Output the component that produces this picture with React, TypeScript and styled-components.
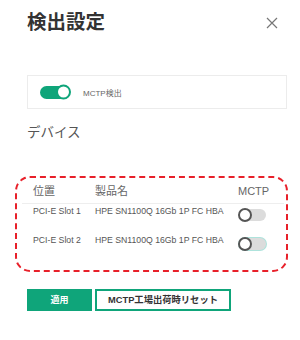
import styled, { createGlobalStyle } from "styled-components";

const GlobalStyle = createGlobalStyle`
    html, body {
        margin: 0;
        padding: 0;
        background: #fff;
    }
    body {
        font-family: "Liberation Sans", "Noto Sans CJK JP", sans-serif;
        color: #333;
    }
`;

const Panel = styled.div`
    width: 300px;
    height: 340px;
    box-sizing: border-box;
    padding: 8px 12px 0 15px;
    display: flex;
    flex-direction: column;
`;

const Header = styled.div`
    display: flex;
    justify-content: space-between;
    align-items: flex-start;
    padding: 0 10px 0 12px;
    height: 28px;
`;

const Title = styled.h1`
    margin: 0;
    font-size: 19.5px;
    line-height: 28px;
    font-weight: 700;
    color: #333;
`;

const CloseButton = styled.button`
    border: none;
    background: none;
    padding: 0;
    margin-top: 9px;
    width: 12px;
    height: 12px;
    color: #777;
    cursor: pointer;
`;

const OptionCard = styled.div`
    margin: 39px 1px 0 12px;
    height: 32px;
    flex-shrink: 0;
    border: 1px solid #ececec;
    display: flex;
    align-items: center;
    gap: 13px;
    padding-left: 12px;
`;

const OptionLabel = styled.span`
    font-size: 8px;
    color: #666;
`;

const Track = styled.span<{ $on?: boolean; $focus?: boolean }>`
    position: relative;
    display: inline-block;
    box-sizing: border-box;
    width: ${({ $on }) => ($on ? "30px" : "27px")};
    height: ${({ $on }) => ($on ? "13px" : "12px")};
    border-radius: 7px;
    background: ${({ $on }) => ($on ? "#0fa57a" : "#dcdcdc")};
    box-shadow: ${({ $focus }) => ($focus ? "0 0 0 1px #aee3dc" : "none")};
`;

const Knob = styled.span<{ $on?: boolean }>`
    position: absolute;
    top: 50%;
    transform: translateY(-50%);
    box-sizing: border-box;
    width: ${({ $on }) => ($on ? "15px" : "14px")};
    height: ${({ $on }) => ($on ? "15px" : "14px")};
    border-radius: 50%;
    background: #fff;
    border: 2px solid ${({ $on }) => ($on ? "#0fa57a" : "#555")};
    ${({ $on }) => ($on ? "right: -1px;" : "left: -1px;")}
`;

const SectionTitle = styled.h2`
    margin: 15px 0 0 12px;
    font-size: 13.5px;
    line-height: 18px;
    font-weight: 400;
    color: #555;
`;

const DeviceBox = styled.div`
    margin: 34px 0 0 0;
    height: 96px;
    flex-shrink: 0;
    box-sizing: border-box;
    border: 2px dashed #e8202a;
    border-radius: 15px;
    padding: 1px 2px 0 5px;
    overflow: hidden;
`;

const Table = styled.table`
    width: 100%;
    table-layout: fixed;
    border-collapse: collapse;
`;

const Th = styled.th<{ $first?: boolean }>`
    text-align: left;
    font-weight: 400;
    font-size: 11px;
    line-height: 14px;
    color: #666;
    height: 24px;
    padding: 0 0 0 ${({ $first }) => ($first ? "11px" : "0")};
    border-bottom: 1px solid #eee;
    white-space: nowrap;
`;

const Td = styled.td<{ $first?: boolean }>`
    font-size: 8.7px;
    line-height: 11px;
    color: #555;
    vertical-align: top;
    padding: 2px 0 0 ${({ $first }) => ($first ? "11px" : "0")};
    height: 27px;
    white-space: nowrap;
    text-align: left;
`;

const ToggleCell = styled.div`
    padding: 3px 0 0 1px;
    display: flex;
`;

const Actions = styled.div`
    display: flex;
    gap: 3px;
    margin: 17px 0 0 12px;
    height: 22px;
    flex-shrink: 0;
`;

const PrimaryButton = styled.button`
    width: 65px;
    height: 22px;
    border: none;
    background: #0fa57a;
    color: #fff;
    font-family: inherit;
    font-size: 9px;
    line-height: 12px;
    font-weight: 700;
`;

const SecondaryButton = styled.button`
    height: 22px;
    padding: 0 11px;
    background: #fff;
    border: 2px solid #0fa57a;
    color: #333;
    font-family: inherit;
    font-size: 9.3px;
    line-height: 12px;
    font-weight: 700;
`;

function Toggle({ on, focus }: { on?: boolean; focus?: boolean }) {
    return (
        <Track $on={on} $focus={focus}>
            <Knob $on={on} />
        </Track>
    );
}

const devices = [
    { slot: "PCI-E Slot 1", name: "HPE SN1100Q 16Gb 1P FC HBA", focus: false },
    { slot: "PCI-E Slot 2", name: "HPE SN1100Q 16Gb 1P FC HBA", focus: true },
];

export default function App() {
    return (
        <>
            <GlobalStyle />
            <Panel>
                <Header>
                    <Title>検出設定</Title>
                    <CloseButton aria-label="close">
                        <svg width="12" height="12" viewBox="0 0 12 12">
                            <path d="M1 1L11 11M11 1L1 11" stroke="currentColor" strokeWidth="1.2" />
                        </svg>
                    </CloseButton>
                </Header>
                <OptionCard>
                    <Toggle on />
                    <OptionLabel>MCTP検出</OptionLabel>
                </OptionCard>
                <SectionTitle>デバイス</SectionTitle>
                <DeviceBox>
                    <Table>
                        <colgroup>
                            <col style={{ width: 73 }} />
                            <col style={{ width: 143 }} />
                            <col />
                        </colgroup>
                        <thead>
                            <tr>
                                <Th $first>位置</Th>
                                <Th>製品名</Th>
                                <Th>MCTP</Th>
                            </tr>
                        </thead>
                        <tbody>
                            {devices.map((d) => (
                                <tr key={d.slot}>
                                    <Td $first>{d.slot}</Td>
                                    <Td>{d.name}</Td>
                                    <Td>
                                        <ToggleCell>
                                            <Toggle focus={d.focus} />
                                        </ToggleCell>
                                    </Td>
                                </tr>
                            ))}
                        </tbody>
                    </Table>
                </DeviceBox>
                <Actions>
                    <PrimaryButton>適用</PrimaryButton>
                    <SecondaryButton>MCTP工場出荷時リセット</SecondaryButton>
                </Actions>
            </Panel>
        </>
    );
}
